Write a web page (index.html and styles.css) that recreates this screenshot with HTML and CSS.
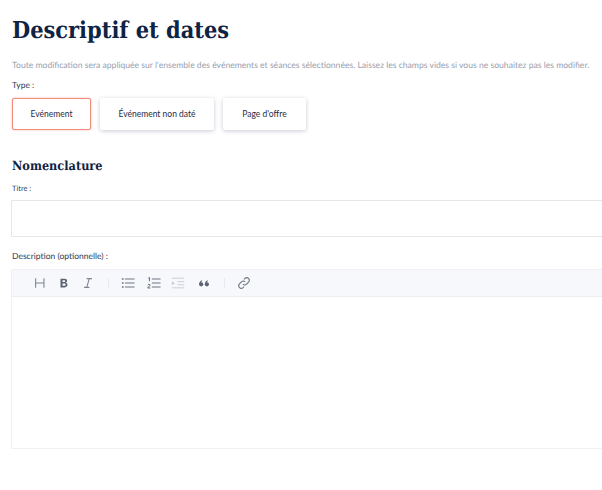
FILE: index.html
```html
<!DOCTYPE html>
<html lang="fr">
<head>
<meta charset="utf-8">
<title>Descriptif et dates</title>
<link rel="stylesheet" href="styles.css">
</head>
<body>
<main class="page">
  <h1 class="title">Descriptif et dates</h1>
  <p class="intro">Toute modification sera appliquée sur l'ensemble des événements et séances sélectionnées. Laissez les champs vides si vous ne souhaitez pas les modifier.</p>
  <div class="type-label">Type :</div>
  <div class="types">
    <button class="type type-active">Evénement</button>
    <button class="type type-wide">Événement non daté</button>
    <button class="type type-offer">Page d'offre</button>
  </div>
  <h2 class="section">Nomenclature</h2>
  <label class="field-label">Titre :</label>
  <div class="input"></div>
  <label class="field-label desc-label">Description (optionnelle) :</label>
  <div class="editor">
    <div class="toolbar">
      <svg class="ic" viewBox="0 0 16 16"><path d="M3 2.500v11M12.500 2.500v11M3 8h9.500" fill="none" stroke="#7d8290" stroke-width="1.200"/></svg>
      <svg class="ic" viewBox="0 0 16 16"><path d="M4 3h4.700c1.800 0 2.800 1 2.800 2.400 0 1.100-.6 1.900-1.500 2.200 1.200.3 2 1.200 2 2.500 0 1.800-1.300 2.900-3.200 2.900H4zM6.300 4.800v2.100h2c.7 0 1.100-.4 1.100-1s-.4-1.100-1.100-1.100zM6.300 8.600v2.600h2.300c.8 0 1.300-.5 1.300-1.300s-.5-1.300-1.300-1.300z" fill="#5c6270" fill-rule="evenodd"/></svg>
      <svg class="ic" viewBox="0 0 16 16"><path d="M6.500 3h6M3.500 13h6M9.500 3l-3 10" fill="none" stroke="#7d8290" stroke-width="1.200"/></svg>
      <span class="sep"></span>
      <svg class="ic" viewBox="0 0 16 16"><path d="M4.500 3.500h11M4.500 8h11M4.500 12.500h11" stroke="#6f7482" stroke-width="1.200"/><path d="M1 3.500h2M1 8h2M1 12.500h2" stroke="#6f7482" stroke-width="1.600"/></svg>
      <svg class="ic ic-shift" viewBox="0 0 16 16"><path d="M5.500 3.500h10M5.500 8h10M5.500 12.500h10" stroke="#6f7482" stroke-width="1.200"/><path d="M1.500 2.500l1.300-.8v4.300M.8 10.200c.4-1 2.800-1 2.800.3 0 1-2.800 2-2.800 3.200h3" fill="none" stroke="#4f5564" stroke-width="1"/></svg>
      <svg class="ic" viewBox="0 0 16 16"><path d="M1 2.500h14M7.500 6.500h7.500M7.500 10h7.500M1 13.500h14" stroke="#c9cdd4" stroke-width="1.100"/><path d="M1 6l3.500 2.200L1 10.500z" fill="#c9cdd4"/></svg>
      <svg class="ic ic-shift" viewBox="0 0 16 16"><circle cx="4.800" cy="9.500" r="2.400" fill="#5c6270"/><circle cx="11.300" cy="9.500" r="2.400" fill="#5c6270"/><path d="M2.600 9C2.800 6.800 3.900 5.300 5.800 4.800v1.300C4.700 6.600 4.300 7.500 4.300 9zM9.100 9c.2-2.200 1.300-3.700 3.200-4.200v1.300c-1.100.5-1.500 1.400-1.500 2.900z" fill="#5c6270"/></svg>
      <span class="sep"></span>
      <svg class="ic" viewBox="0 0 16 16"><path d="M6.800 9.200a2.900 2.900 0 0 0 4.100 0l2.300-2.300a2.900 2.900 0 0 0-4.100-4.100L8 3.900M9.200 6.800a2.900 2.900 0 0 0-4.100 0L2.800 9.100a2.900 2.900 0 0 0 4.100 4.100L8 12.100" fill="none" stroke="#6f7482" stroke-width="1.200"/></svg>
    </div>
    <div class="editor-body"></div>
  </div>
</main>
</body>
</html>
```
FILE: styles.css
```css
html, body {
  margin: 0;
  padding: 0;
  background: #fff;
}
.page {
  height: 490px;
  padding: 15px 0 0 11px;
  box-sizing: border-box;
  font-family: "Lato", "Liberation Sans", sans-serif;
  text-rendering: geometricPrecision;
  color: #1d2b45;
}
.title {
  margin: 0 0 0 1px;
  font-family: "DejaVu Serif Condensed", "DejaVu Serif", serif;
  font-weight: 700;
  font-size: 23.300px;
  line-height: 32px;
  color: #0f2444;
}
.intro {
  margin: 12px 0 0 1px;
  font-size: 8.600px;
  line-height: 12px;
  color: #99a0b0;
  white-space: nowrap;
}
.type-label {
  margin: 8px 0 0 1px;
  font-size: 8.500px;
  line-height: 12px;
  color: #2f3a52;
}
.types {
  display: flex;
  gap: 9px;
  margin: 7px 0 0 1px;
}
.type {
  height: 32px;
  padding: 0;
  background: #fff;
  border: 0;
  border-radius: 2px;
  box-shadow: 0 1px 4px rgba(60, 70, 100, .28);
  font: 8.500px "Lato", "Liberation Sans", sans-serif;
  color: #1f2b45;
}
.type-active {
  width: 79px;
  border: 1px solid #f28d7c;
  box-shadow: 0 0 2px rgba(240, 120, 100, .6);
}
.type-wide { width: 114px; }
.type-offer { width: 83px; }
.section {
  margin: 27px 0 0 1px;
  font-family: "DejaVu Serif Condensed", "DejaVu Serif", serif;
  font-size: 12.600px;
  font-weight: 700;
  line-height: 18px;
  color: #0f2444;
}
.field-label {
  display: block;
  margin: 8px 0 0 1px;
  font-size: 7.500px;
  line-height: 11px;
  color: #2f3a52;
}
.input {
  height: 35px;
  margin-top: 6px;
  background: #fff;
  border: 1px solid #e6e6e8;
  border-right: 0;
  border-radius: 2px 0 0 2px;
}
.desc-label {
  margin-top: 13px;
  font-size: 8.500px;
  line-height: 12px;
}
.editor {
  margin-top: 7px;
  height: 180px;
  border: 1px solid #eef0f3;
  border-right: 0;
  border-radius: 2px 0 0 2px;
  box-sizing: border-box;
}
.toolbar {
  display: flex;
  align-items: center;
  height: 27px;
  padding-left: 21px;
  gap: 9px;
  background: #f7f8fb;
  border-bottom: 1px solid #eceef2;
  box-sizing: border-box;
}
.ic {
  width: 14px;
  height: 14px;
  margin-right: 1px;
  flex: none;
}
.ic-shift { margin-left: 2px; }
.sep {
  width: 1px;
  height: 10px;
  margin: 0 3px;
  background: #e8eaee;
}
.editor-body {
  height: 151px;
  background: #fff;
}
```
